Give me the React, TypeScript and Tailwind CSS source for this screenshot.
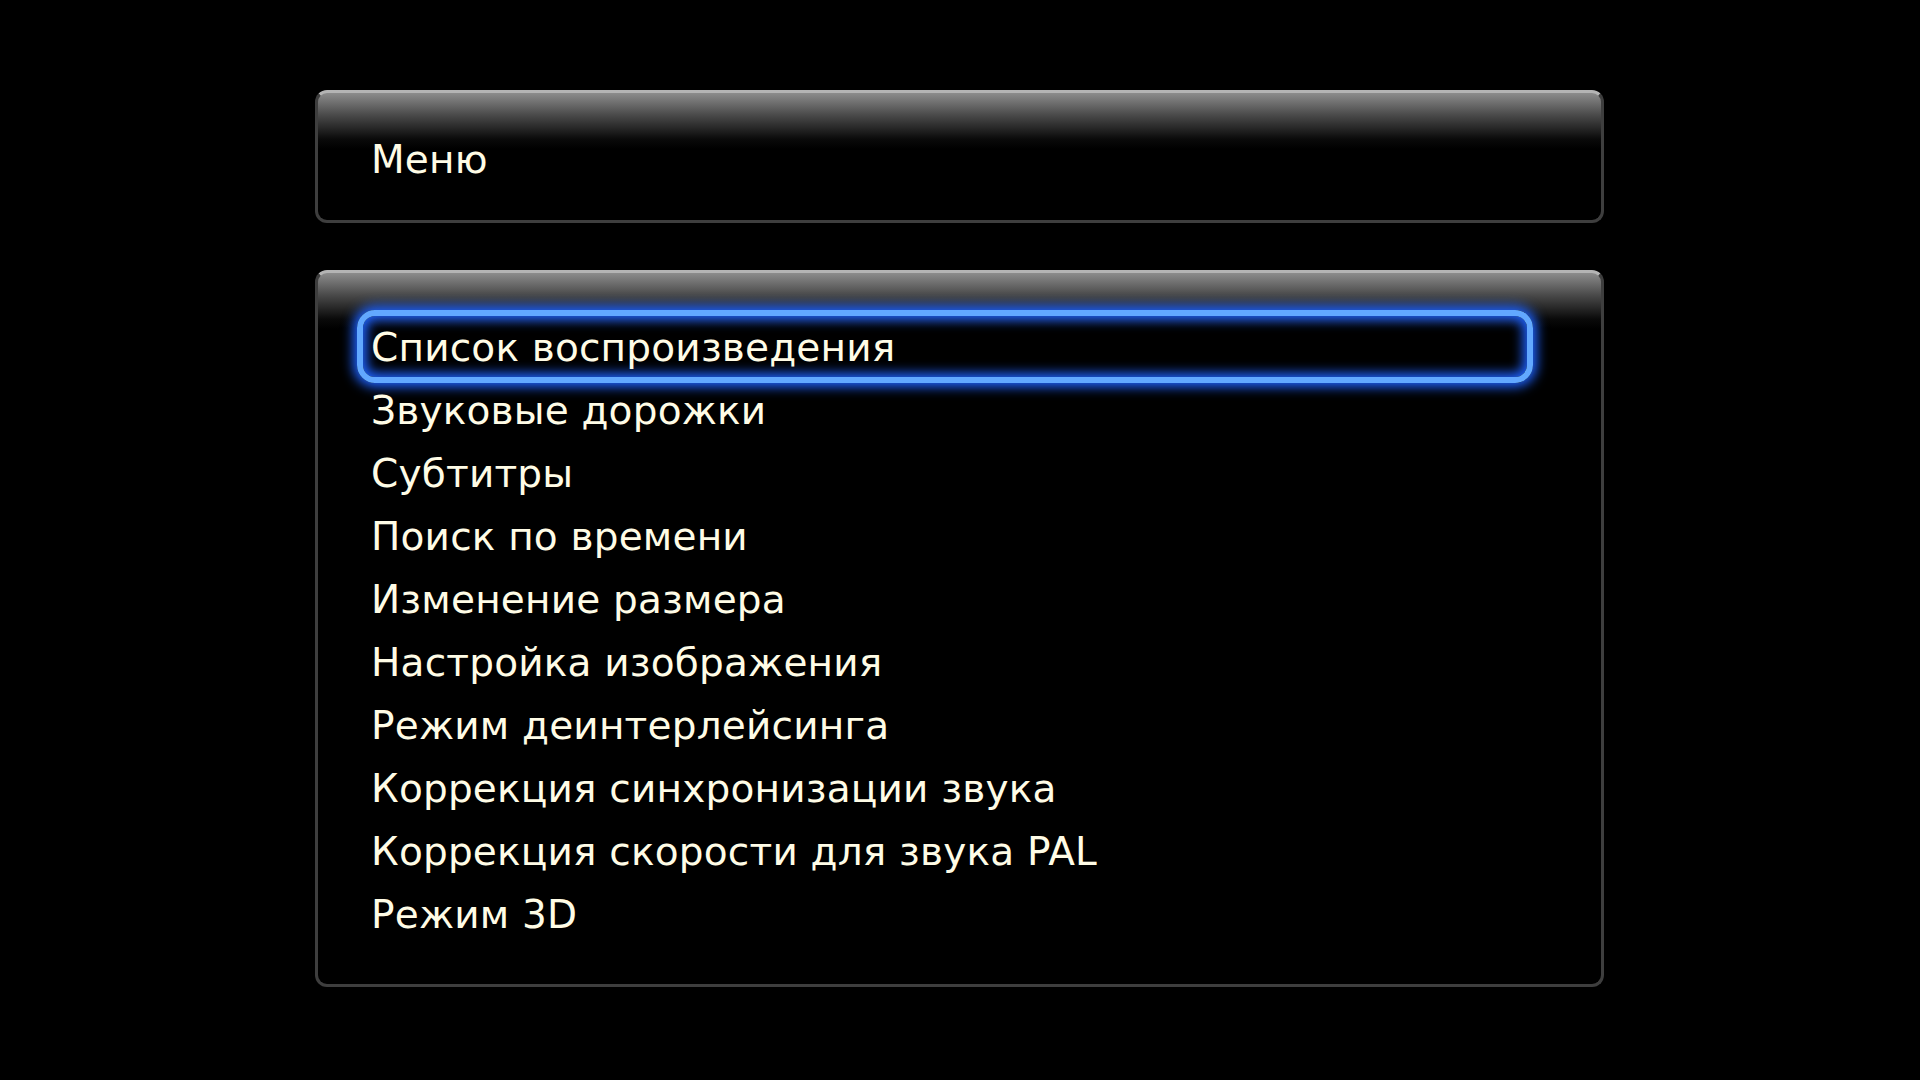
import React from 'react';

const ITEMS = [
  'Список воспроизведения',
  'Звуковые дорожки',
  'Субтитры',
  'Поиск по времени',
  'Изменение размера',
  'Настройка изображения',
  'Режим деинтерлейсинга',
  'Коррекция синхронизации звука',
  'Коррекция скорости для звука PAL',
  'Режим 3D',
];

const panel =
  'rounded-[12px] border-[3px] border-[#3e3e3e] border-t-[#b4b4b4] bg-[linear-gradient(to_bottom,#8c8c8c_0px,#4a4a4a_22px,#0a0a0a_46px,#000_56px)]';

export default function App() {
  const selected = 0;

  return (
    <div
      className="w-[1920px] h-[1080px] bg-black text-[#fffce6] overflow-hidden"
      style={{ fontFamily: '"DejaVu Sans", Verdana, sans-serif' }}
    >
      <div className="ml-[315px] pt-[90px] w-[1289px]">
        <div className={`${panel} h-[133px] flex items-center pl-[53px] pt-[5px]`}>
          <span className="text-[39px] leading-none tracking-[0.2px]">Меню</span>
        </div>

        <div className={`${panel} mt-[47px] h-[717px] pt-[43px] pl-[39px] pr-[68px]`}>
          {ITEMS.map((item, i) => (
            <div key={item} className="relative h-[63px] flex items-center pl-[14px]">
              {i === selected && (
                <div className="absolute left-0 right-0 top-[-6px] bottom-[-4px] rounded-[18px] border-[6px] border-[#62a8ff] shadow-[0_0_12px_4px_#1e62ff,inset_0_0_12px_4px_#1e62ff]" />
              )}
              <span className="relative text-[39px] leading-none tracking-[0.2px]">{item}</span>
            </div>
          ))}
        </div>
      </div>
    </div>
  );
}
